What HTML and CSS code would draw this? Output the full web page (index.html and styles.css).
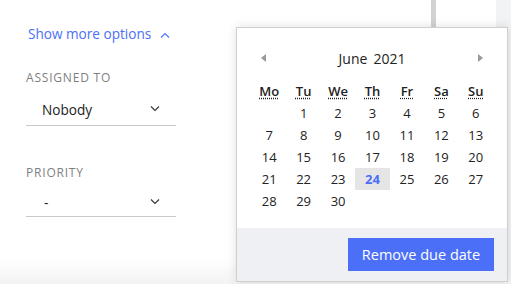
FILE: index.html
```html
<!DOCTYPE html>
<html lang="en">
<head>
  <meta charset="UTF-8" />
  <meta name="viewport" content="width=device-width, initial-scale=1" />
  <title>Task options</title>
  <link rel="stylesheet" href="styles.css">
</head>
<body>

  <div class="page">
    <div class="panel">
      <div class="options">
        <a class="toggle" href="#">Show more options
          <svg class="chev" width="10" height="6" viewBox="0 0 10 6"><path d="M1 5.5L5 1.5L9 5.5" fill="none" stroke="currentColor" stroke-width="1.1"/></svg>
        </a>

        <label class="field-label">Assigned to</label>
        <div class="select">
          <span>Nobody</span>
          <svg class="chev" width="10" height="6" viewBox="0 0 10 6"><path d="M1 0.5L5 4.5L9 0.5" fill="none" stroke="#333" stroke-width="1.1"/></svg>
        </div>

        <label class="field-label">Priority</label>
        <div class="select select-short">
          <span class="dash">-</span>
          <svg class="chev" width="10" height="6" viewBox="0 0 10 6"><path d="M1 0.5L5 4.5L9 0.5" fill="none" stroke="#333" stroke-width="1.1"/></svg>
        </div>
      </div>
      <div class="rule"></div>
      <div class="fade"></div>
    </div>
    <div class="aside"></div>
  </div>

  <div class="datepicker">
    <div class="calendar">
      <div class="month">
        <span class="arrow prev"></span>
        <span class="title"><span>June</span><span>2021</span></span>
        <span class="arrow next"></span>
      </div>
      <div class="grid" id="grid">
        <abbr title="Monday">Mo</abbr>
        <abbr title="Tuesday">Tu</abbr>
        <abbr title="Wednesday">We</abbr>
        <abbr title="Thursday">Th</abbr>
        <abbr title="Friday">Fr</abbr>
        <abbr title="Saturday">Sa</abbr>
        <abbr title="Sunday">Su</abbr>
      </div>
    </div>
    <div class="picker-footer">
      <button type="button">Remove due date</button>
    </div>
  </div>

  <script>
    // June 2021 starts on a Tuesday
    const grid = document.getElementById("grid");
    const offset = 1;
    for (let i = 0; i < offset; i++) {
      grid.appendChild(document.createElement("span"));
    }
    for (let d = 1; d <= 30; d++) {
      const cell = document.createElement("span");
      cell.className = "day" + (d === 24 ? " selected" : "");
      cell.textContent = d;
      grid.appendChild(cell);
    }
  </script>

</body>
</html>
```

FILE: styles.css
```css
body {
  margin: 0;
  font-family: 'Open Sans', 'Noto Sans', sans-serif;
  background: #fff;
  overflow: hidden;
}
.page {
  display: flex;
  width: 511px;
  height: 284px;
}
.panel {
  position: relative;
  width: 496px;
  background: #fff;
}
.aside {
  flex: 1;
  background: #f2f3f5;
}
.rule {
  position: absolute;
  left: 431px;
  top: 0;
  width: 5px;
  height: 40px;
  background: #d2d2d2;
}
.fade {
  position: absolute;
  left: 0;
  right: 0;
  bottom: 0;
  height: 24px;
  background: linear-gradient(to bottom, rgba(240,240,240,0), #f3f3f3);
}
.options {
  width: 150px;
  padding: 24px 0 0 26px;
}
.toggle {
  display: flex;
  align-items: center;
  gap: 9px;
  margin-left: 2px;
  font-size: 13.6px;
  color: #4b6ff7;
  text-decoration: none;
  line-height: 20px;
}
.toggle .chev {
  margin-top: 2px;
}
.field-label {
  display: block;
  margin-top: 26px;
  font-size: 12px;
  line-height: 16px;
  letter-spacing: 0.8px;
  text-transform: uppercase;
  color: #7f7f7f;
}
.field-label + .select {
  margin-top: 7px;
}
.options .select + .field-label {
  margin-top: 39px;
}
.select {
  display: flex;
  align-items: center;
  justify-content: space-between;
  height: 32px;
  padding: 0 16px 0 16px;
  border-bottom: 1px solid #c9c9c9;
  font-size: 13.6px;
  color: #222;
}
.select-short {
  height: 28px;
}
.select .dash {
  padding-left: 2px;
}
.datepicker {
  position: absolute;
  left: 236px;
  top: 27px;
  width: 270px;
  background: #fff;
  border: 1px solid #cfcfcf;
  box-shadow: 0 0 10px rgba(0,0,0,0.12);
}
.calendar {
  padding: 19px 14px 16px 15px;
}
.month {
  display: flex;
  align-items: center;
  justify-content: space-between;
  height: 22px;
  padding: 0 9px 0 9px;
  font-size: 14px;
  color: #222;
}
.month .title span + span {
  margin-left: 6px;
}
.arrow {
  width: 0;
  height: 0;
  border-top: 4px solid transparent;
  border-bottom: 4px solid transparent;
}
.arrow.prev {
  border-right: 5px solid #9a9a9a;
}
.arrow.next {
  border-left: 5px solid #9a9a9a;
  margin-right: 1px;
}
.grid {
  display: grid;
  grid-template-columns: repeat(7, 1fr);
  grid-auto-rows: 22px;
  margin-top: 11px;
  font-size: 13px;
  color: #222;
}
.grid abbr,
.grid span {
  display: flex;
  align-items: center;
  justify-content: center;
}
.grid abbr {
  font-weight: 600;
  text-decoration: underline dotted;
  text-underline-offset: 2px;
}
.grid .selected {
  background: #e5e5e5;
  color: #4b6ff7;
  font-weight: 700;
}
.picker-footer {
  display: flex;
  justify-content: flex-end;
  padding: 10px 13px 10px 0;
  background: #eff0f3;
}
.picker-footer button {
  width: 146px;
  height: 33px;
  border: none;
  background: #4b6ff7;
  color: #fff;
  font-family: inherit;
  font-size: 14.5px;
  cursor: pointer;
}
```
